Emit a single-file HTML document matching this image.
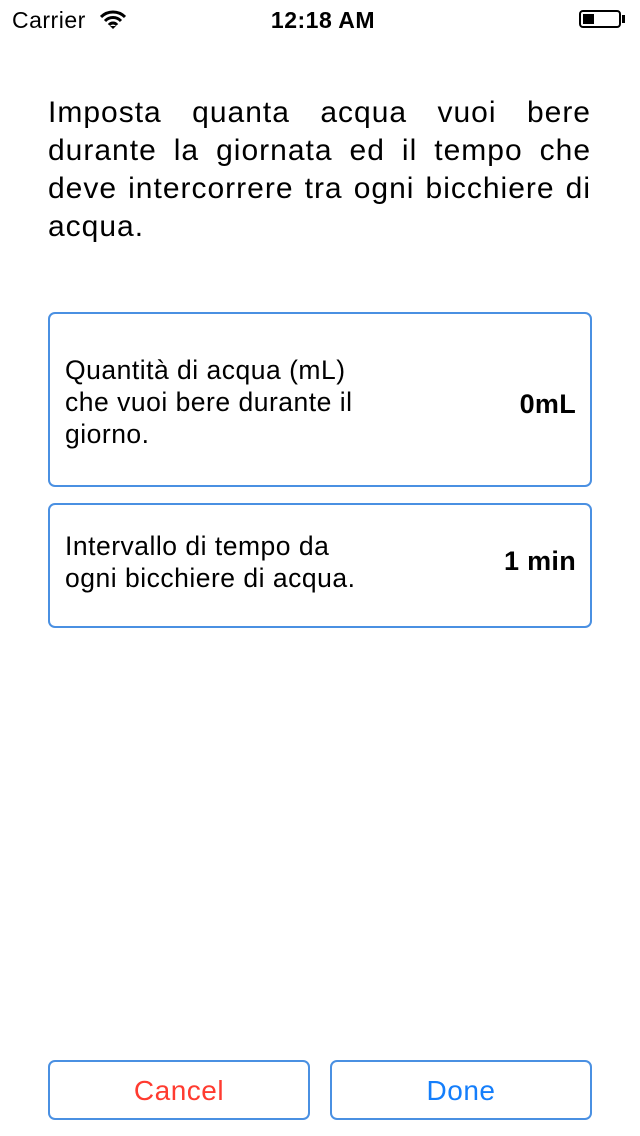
<!DOCTYPE html>
<html><head><meta charset="utf-8"><style>
body{margin:0;width:640px;height:1136px;background:#fff;font-family:"Liberation Sans",sans-serif;position:relative;overflow:hidden;color:#000}
.abs{position:absolute}
.box{position:absolute;left:48px;width:540px;border:2px solid #4a90e2;border-radius:7px;box-sizing:content-box}
.lbl{position:absolute;left:15px;font-size:26.5px;line-height:32px;letter-spacing:0.5px;white-space:nowrap}
.val{position:absolute;right:14px;font-size:27px;font-weight:bold;letter-spacing:0.3px}
.btn{position:absolute;top:1060px;width:258px;height:56px;border:2px solid #4a90e2;border-radius:7px;font-size:28px;text-align:center;line-height:58px;letter-spacing:0.5px}
.hl{text-align:justify;text-align-last:justify;height:38px;white-space:nowrap}
</style></head><body>
<div class="abs" style="left:12px;top:7px;font-size:23px;letter-spacing:0.5px">Carrier</div>
<svg class="abs" style="left:100px;top:10px" width="26" height="20" viewBox="0 0 26 20"><path d="M1 7 A17 17 0 0 1 25 7 M5 11 A11 11 0 0 1 21 11 M9 15 A5 5 0 0 1 17 15" stroke="#000" stroke-width="3" fill="none"/><path d="M10 16 L13 19 L16 16 Z" fill="#000"/></svg>
<div class="abs" style="left:0;width:646px;text-align:center;top:7px;font-size:23px;font-weight:bold;letter-spacing:0.5px">12:18 AM</div>
<div class="abs" style="left:579px;top:10px;width:42px;height:18px;border:2px solid #000;border-radius:4px;box-sizing:border-box"><div style="position:absolute;left:2px;top:2px;width:11px;height:10px;background:#000"></div></div>
<div class="abs" style="left:622px;top:15px;width:3px;height:8px;background:#000"></div>
<div class="abs" style="left:48px;top:94px;width:543px;font-size:30px;line-height:38px;letter-spacing:1px">
<div class="hl">Imposta quanta acqua vuoi bere</div>
<div class="hl">durante la giornata ed il tempo che</div>
<div class="hl">deve intercorrere tra ogni bicchiere di</div>
<div style="height:38px">acqua.</div>
</div>
<div class="box" style="top:312px;height:171px">
<div class="lbl" style="top:40px">Quantità di acqua (mL)<br>che vuoi bere durante il<br>giorno.</div>
<div class="val" style="top:75px">0mL</div></div>
<div class="box" style="top:503px;height:121px">
<div class="lbl" style="top:25px">Intervallo di tempo da<br>ogni bicchiere di acqua.</div>
<div class="val" style="top:41px">1 min</div></div>
<div class="btn" style="left:48px;color:#ff3b30">Cancel</div>
<div class="btn" style="left:330px;color:#147efb">Done</div>
</body></html>
